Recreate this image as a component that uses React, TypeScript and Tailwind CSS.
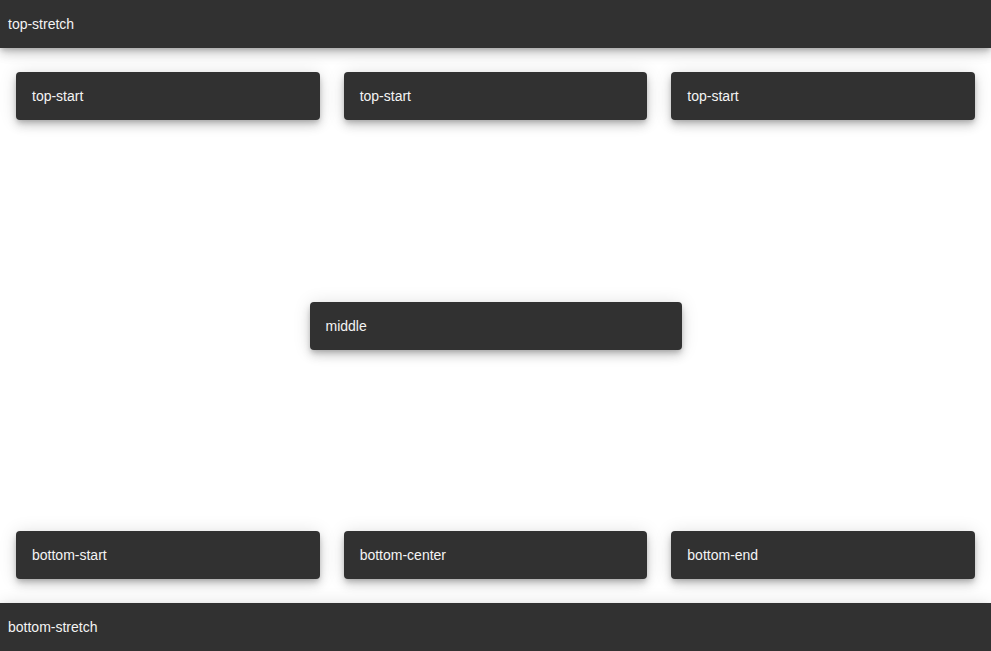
const shadow =
  "shadow-[0_3px_5px_-1px_rgba(0,0,0,0.2),0_6px_10px_0_rgba(0,0,0,0.14),0_1px_18px_0_rgba(0,0,0,0.12)]";

function Toast({ label, className = "" }: { label: string; className?: string }) {
  return (
    <div
      className={`flex h-12 items-center rounded bg-[#313131] px-4 text-sm text-[#f4f4f4] ${shadow} ${className}`}
    >
      {label}
    </div>
  );
}

function Bar({ label }: { label: string }) {
  return (
    <div className={`flex h-12 w-full items-center bg-[#313131] px-2 text-sm text-[#f4f4f4] ${shadow}`}>
      {label}
    </div>
  );
}

export default function App() {
  return (
    <div
      className="flex h-[651px] w-full flex-col bg-white"
      style={{ fontFamily: '"Liberation Sans", Arial, sans-serif' }}
    >
      <Bar label="top-stretch" />

      <div className="mt-6 grid grid-cols-3 gap-6 px-4">
        <Toast label="top-start" />
        <Toast label="top-start" />
        <Toast label="top-start" />
      </div>

      <div className="flex flex-1 items-center justify-center">
        <Toast label="middle" className="w-[372px]" />
      </div>

      <div className="mb-6 grid grid-cols-3 gap-6 px-4">
        <Toast label="bottom-start" />
        <Toast label="bottom-center" />
        <Toast label="bottom-end" />
      </div>

      <Bar label="bottom-stretch" />
    </div>
  );
}
